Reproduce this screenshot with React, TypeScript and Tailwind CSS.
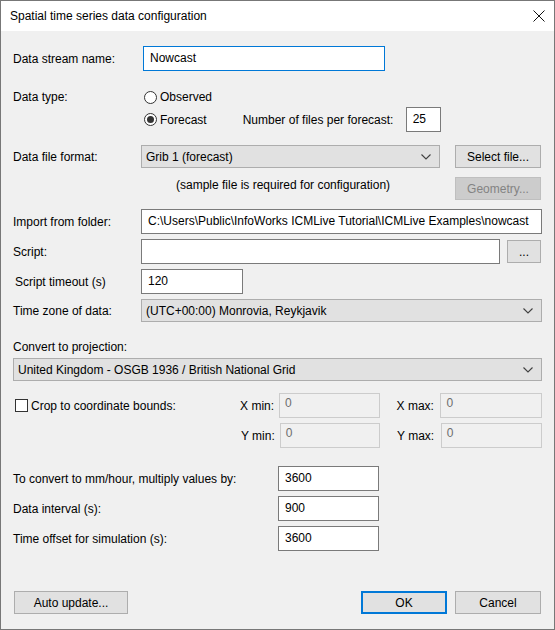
import React from 'react';

const font = { fontFamily: '"Liberation Sans", Arial, sans-serif' };

function Chevron() {
  return (
    <svg width="10" height="6" viewBox="0 0 10 6" className="shrink-0">
      <path d="M0.5 0.5 L5 5 L9.5 0.5" fill="none" stroke="#404040" strokeWidth="1.1" />
    </svg>
  );
}

function Combo({ value, className }: { value: string; className: string }) {
  return (
    <div className={`h-[23px] flex items-center justify-between pl-[4px] pr-[8px] bg-[#e1e1e1] border border-[#adadad] ${className}`}>
      <span>{value}</span>
      <Chevron />
    </div>
  );
}

function Edit({ value = '', className, focused = false, disabled = false }: { value?: string; className: string; focused?: boolean; disabled?: boolean }) {
  return (
    <div
      className={`h-[25px] flex items-start border ${
        disabled
          ? 'bg-[#f0f0f0] border-[#cccccc] text-[#6d6d6d] pl-[5px] pt-0'
          : focused
          ? 'bg-white border-[#0078d7] pl-[6px] pt-[2px]'
          : 'bg-white border-[#7a7a7a] pl-[6px] pt-[2px]'
      } ${className}`}
    >
      {value}
    </div>
  );
}

function Button({ label, className, disabled = false, primary = false }: { label: string; className: string; disabled?: boolean; primary?: boolean }) {
  return (
    <div
      className={`h-[23px] flex items-center justify-center ${
        disabled
          ? 'bg-[#cccccc] border border-[#bfbfbf] text-[#838383]'
          : primary
          ? 'bg-[#e1e1e1] border-2 border-[#0078d7]'
          : 'bg-[#e1e1e1] border border-[#adadad]'
      } ${className}`}
    >
      {label}
    </div>
  );
}

function Radio({ label, checked = false }: { label: string; checked?: boolean }) {
  return (
    <div className="flex items-center gap-[3px]">
      <span className="w-[13px] h-[13px] rounded-full border border-[#333] bg-white flex items-center justify-center">
        {checked && <span className="w-[7px] h-[7px] rounded-full bg-[#333]" />}
      </span>
      <span>{label}</span>
    </div>
  );
}

export default function App() {
  return (
    <div style={font} className="w-[555px] h-[630px] border border-[#777] bg-[#f0f0f0] text-[12px] text-black flex flex-col overflow-hidden">
      {/* Title bar */}
      <div className="h-[30px] bg-white flex items-center justify-between pl-[9px] pr-[8px] shrink-0">
        <span>Spatial time series data configuration</span>
        <svg width="12" height="12" viewBox="0 0 12 12" className="mr-[1px]">
          <path d="M0.5 0.5 L11.5 11.5 M11.5 0.5 L0.5 11.5" stroke="#111" strokeWidth="1" />
        </svg>
      </div>

      {/* Body */}
      <div className="flex flex-col pl-[12px] pr-[12px]">
        <div className="flex items-center mt-[15px]">
          <span className="w-[130px]">Data stream name:</span>
          <Edit value="Nowcast" focused className="w-[242px]" />
        </div>

        <div className="flex mt-[18px]">
          <span className="w-[131px] h-[16px] flex items-center">Data type:</span>
          <div className="flex flex-col">
            <div className="h-[16px] flex items-center">
              <Radio label="Observed" />
            </div>
            <div className="h-[25px] flex items-center mt-[2px]">
              <Radio label="Forecast" checked />
              <span className="ml-[36px] w-[163px]">Number of files per forecast:</span>
              <Edit value="25" className="w-[35px]" />
            </div>
          </div>
        </div>

        <div className="flex items-center mt-[13px]">
          <span className="w-[128px]">Data file format:</span>
          <Combo value="Grib 1 (forecast)" className="w-[299px]" />
          <Button label="Select file..." className="w-[86px] ml-[15px]" />
        </div>

        <div className="flex items-start mt-[9px]">
          <span className="ml-[163px] w-[279px] mt-[-1px]">(sample file is required for configuration)</span>
          <Button label="Geometry..." disabled className="w-[86px]" />
        </div>

        <div className="flex items-center mt-[9px]">
          <span className="w-[128px]">Import from folder:</span>
          <Edit value="C:\Users\Public\InfoWorks ICMLive Tutorial\ICMLive Examples\nowcast" className="w-[401px]" />
        </div>

        <div className="flex items-center mt-[5px]">
          <span className="w-[128px]">Script:</span>
          <Edit className="w-[359px]" />
          <Button label="..." className="w-[34px] ml-[7px]" />
        </div>

        <div className="flex items-center mt-[5px]">
          <span className="w-[126px] ml-[2px]">Script timeout (s)</span>
          <Edit value="120" className="w-[102px]" />
        </div>

        <div className="flex items-center mt-[5px]">
          <span className="w-[128px]">Time zone of data:</span>
          <Combo value="(UTC+00:00) Monrovia, Reykjavik" className="w-[401px]" />
        </div>

        <div className="h-[16px] flex items-center mt-[17px]">Convert to projection:</div>
        <Combo value="United Kingdom - OSGB 1936 / British National Grid" className="w-[529px] mt-[3px]" />

        <div className="flex items-center mt-[12px]">
          <div className="w-[226px] flex items-center ml-[2px]">
            <span className="w-[13px] h-[13px] border border-[#333] bg-white" />
            <span className="ml-[3px]">Crop to coordinate bounds:</span>
          </div>
          <span className="w-[39px]">X min:</span>
          <Edit value="0" disabled className="w-[101px]" />
          <span className="w-[44px] ml-[17px]">X max:</span>
          <Edit value="0" disabled className="w-[102px]" />
        </div>

        <div className="flex items-center mt-[5px]">
          <span className="w-[39px] ml-[228px]">Y min:</span>
          <Edit value="0" disabled className="w-[101px]" />
          <span className="w-[44px] ml-[17px]">Y max:</span>
          <Edit value="0" disabled className="w-[102px]" />
        </div>

        <div className="flex items-center mt-[18px]">
          <span className="w-[265px]">To convert to mm/hour, multiply values by:</span>
          <Edit value="3600" className="w-[101px]" />
        </div>
        <div className="flex items-center mt-[5px]">
          <span className="w-[265px]">Data interval (s):</span>
          <Edit value="900" className="w-[101px]" />
        </div>
        <div className="flex items-center mt-[5px]">
          <span className="w-[265px]">Time offset for simulation (s):</span>
          <Edit value="3600" className="w-[101px]" />
        </div>

        <div className="flex items-center mt-[40px]">
          <Button label="Auto update..." className="w-[114px] ml-[1px]" />
          <div className="flex-1" />
          <Button label="OK" primary className="w-[86px]" />
          <Button label="Cancel" className="w-[86px] ml-[8px] mr-[1px]" />
        </div>
      </div>
    </div>
  );
}
